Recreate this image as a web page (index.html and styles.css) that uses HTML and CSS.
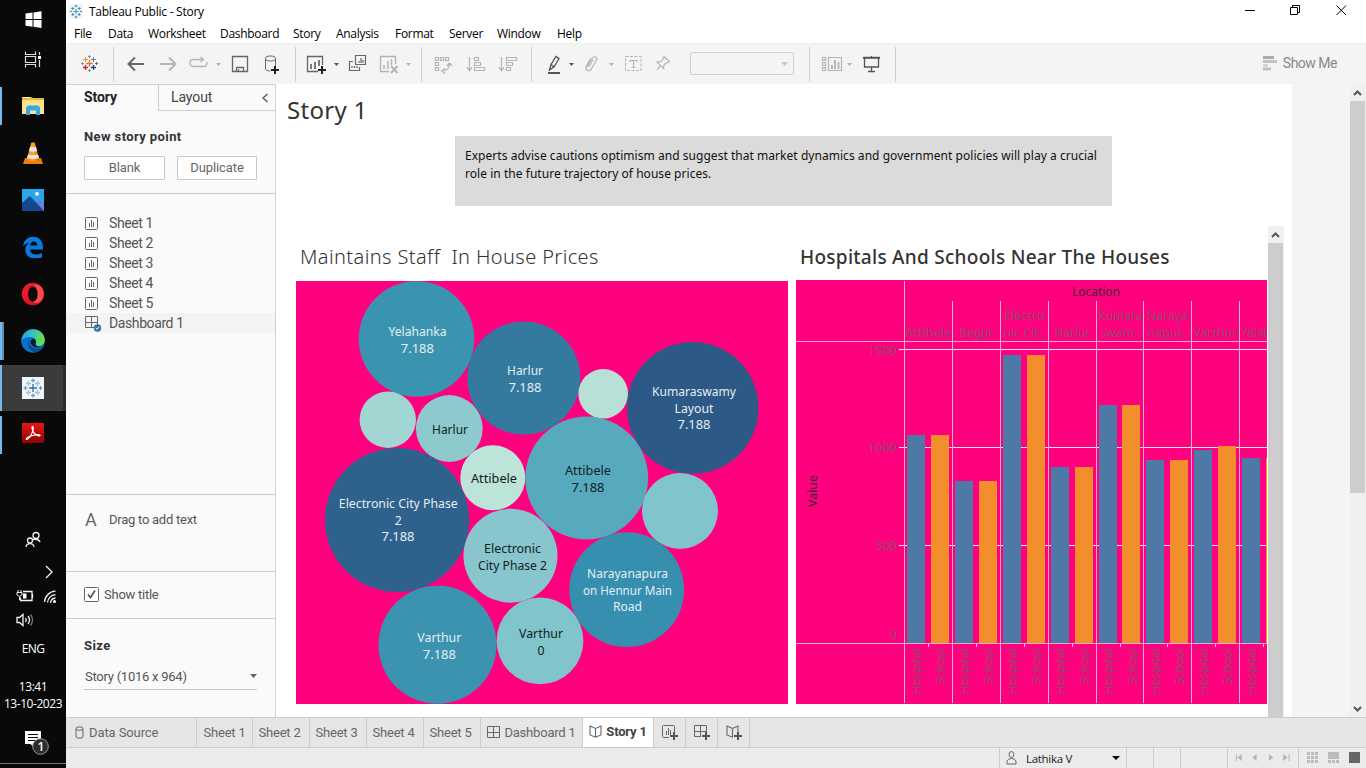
FILE: index.html
```html
<!DOCTYPE html>
<html lang="en">
<head>
<meta charset="utf-8">
<title>Tableau Public - Story</title>
<link rel="stylesheet" href="styles.css">
</head>
<body>
<svg width="0" height="0" class="defs" aria-hidden="true">
  <defs>
    <linearGradient id="gVlc" x1="0" x2="1"><stop offset="0" stop-color="#f58a0a"/><stop offset=".5" stop-color="#ffa62e"/><stop offset="1" stop-color="#d95f00"/></linearGradient>
    <linearGradient id="gPdf" x1="0" y1="0" x2="0" y2="1"><stop offset="0" stop-color="#f01212"/><stop offset="1" stop-color="#8a0505"/></linearGradient>
    <linearGradient id="gEdge" x1="0" y1="0" x2="1" y2=".3"><stop offset="0" stop-color="#1b9de2"/><stop offset=".5" stop-color="#35c1c6"/><stop offset="1" stop-color="#66e04b"/></linearGradient>
    <linearGradient id="gOpera" x1="0" y1="0" x2="1" y2="1"><stop offset="0" stop-color="#ff1b2d"/><stop offset="1" stop-color="#c4101e"/></linearGradient>
    <symbol id="sheet" viewBox="0 0 13 13"><rect x=".5" y=".5" width="12" height="12" rx="1" fill="none" stroke="#666"/><path d="M4.500 6v4M6.500 3v7M8.500 5v5" stroke="#666" fill="none"/></symbol>
    <symbol id="dash" viewBox="0 0 13 13"><path d="M.5.5h12v11H.5zM6.500.5v11M.5 6.500h12" stroke="#666" fill="none"/></symbol>
    <symbol id="book" viewBox="0 0 13 13"><path d="M1 1 6.500 3.500 12 1v9l-5.500 2.200L1 10zM6.500 3.500v8.500" stroke="#666" fill="none" stroke-width="1.100"/></symbol>
    <symbol id="plus" viewBox="0 0 8 8"><path d="M4 0v8M0 4h8" stroke="#555" stroke-width="2"/></symbol>
  </defs>
</svg>

<nav class="taskbar">
  <div class="slot slot-win"><svg width="17" height="17" viewBox="0 0 17 17"><path d="M.5 2.500 7.500 1.500V8h-7zM8.500 1.400 16.500.3V8h-8zM.5 9h7v6.700l-7-1zM8.500 9h8v7.900l-8-1.100z" fill="#fff"/></svg></div>
  <div class="slot slot-view"><svg width="18" height="17" viewBox="0 0 18 17"><path d="M1.500.5v3h10v-3M1.500 16.500v-3h10v3M1.500 5.500h10v6h-10zM15.500 1v3M15.500 9v7" fill="none" stroke="#ddd" stroke-width="1.200"/><rect x="14" y="5" width="3" height="3" fill="#fff"/></svg></div>
  <div class="slot run"><svg width="22" height="20" viewBox="0 0 22 20"><path d="M0 1h9l2 1h11v16H0z" fill="#e8b73c"/><path d="M0 4h22v14H0z" fill="#fde38d"/><path d="M1 1.500h7" stroke="#fff3b0"/><path d="M4 19v-7.500L6 9.500h10l2 2V19h-4v-4.500H8V19z" fill="#33a9e6"/></svg></div>
  <div class="slot"><svg width="22" height="24" viewBox="0 0 22 24"><path d="M3 17h16l2 6H1z" fill="#f07c05"/><path d="M9.300 1.500h3.400L17.500 19q-6.500 2.500-13 0z" fill="url(#gVlc)"/><path d="M8 6h6l1.100 4q-4 1.500-8.200 0zM6 13.500q5 1.600 10 0l1 3.500q-6 2-12 0z" fill="#e9e9e9"/></svg></div>
  <div class="slot"><svg width="22" height="22" viewBox="0 0 22 22"><path d="M0 0h22v22H0z" fill="#2aa6ea"/><path d="M10 22 16.500 10 22 16v6z" fill="#6f7fd8"/><path d="M0 14 8 7l14 15H0z" fill="#15478f"/><circle cx="15" cy="4.800" r="1.900" fill="#fff"/></svg></div>
  <div class="slot"><svg width="22" height="22" viewBox="0 0 22 22"><path d="M1 10C2 4 6 .7 11 .7c6.500 0 10 4.800 10 10.800v2H8c.2 3.800 3.300 5 6.300 5 2.300 0 4.200-.6 5.700-1.500v4.300c-2 .9-4.300 1.300-6.600 1.300C7.200 22.600 3.300 19 3.300 14c0-3 1.500-5.600 4.200-7-4 .4-5.500 2-6.500 3zm7-.5h7.300c0-2.500-1.300-4-3.600-4-2.100 0-3.400 1.700-3.700 4z" fill="#0a7ae0"/></svg></div>
  <div class="slot"><svg width="24" height="24" viewBox="0 0 24 24"><path fill-rule="evenodd" d="M12 .8a11.200 11.200 0 1 0 0 22.400A11.200 11.200 0 0 0 12 .8zm0 3.500c2.800 0 4.800 3.400 4.800 7.700s-2 7.700-4.800 7.700S7.200 16.300 7.200 12 9.200 4.300 12 4.300z" fill="url(#gOpera)"/><path d="M12 4.300c2-2 6-1.500 8.500 1.500a11 11 0 0 1 0 12.400c-2.500 3-6.500 3.500-8.500 1.500 2.800 0 4.800-3.400 4.800-7.700S14.800 4.300 12 4.300z" fill="#ff4a4a"/></svg></div>
  <div class="slot run run-two"><svg width="24" height="24" viewBox="0 0 24 24"><circle cx="12" cy="12" r="11.800" fill="#0e6fc6"/><path d="M.5 11C1.500 4.500 6 .2 12 .2c7 0 11.800 5 11.800 10.800 0 3.500-2.600 6-6 6-2.500 0-4-1-3.300-2.200C16 12.500 14 8 9 8 5 8 1.500 9.500.5 11z" fill="url(#gEdge)"/><path d="M8 14c0-3 1.500-4.500 3.500-5-5 1-6.500 10.500 1 14 4 .8 8-1.500 9.800-5C16 21 8.500 19 8 14z" fill="#114a8b"/><path d="M14.500 14.800c.8-1.800.4-4-1.500-5.300-3 .5-4.500 3.500-2.500 6 1.500 2.500 6 4 12 1.800-3 1-8.500.5-8-2.500z" fill="#061a30"/></svg></div>
  <div class="slot run active"><svg width="22" height="22" viewBox="0 0 22 22"><path d="M0 0h22v22H0z" fill="#f2f5f7"/><path d="M11 7v8M7 11h8" stroke="#2f7196" stroke-width="1.300"/><path d="M11 1.500v4M9 3.500h4M11 16.500v4M9 18.500h4M3.500 9v4M1.500 11h4M18.500 9v4M16.500 11h4" stroke="#5c94b4" stroke-width="1.200"/><path d="M6.500 4v5M4 6.500h5M15.500 4v5M13 6.500h5M6.500 13v5M4 15.500h5M15.500 13v5M13 15.500h5" stroke="#9fc3da" stroke-width="1.300"/></svg></div>
  <div class="slot run slot-pdf"><svg width="22" height="20" viewBox="0 0 22 20"><path d="M0 0h22v20H0z" fill="url(#gPdf)"/><path d="M10.500 3.500c1.800 0 .3 6-2 9.500s-4.500 4.200-4.300 2.800C4.500 13.500 17 10.500 18 12.300c.5 1.500-4 .2-6-2.500s-2.500-6.300-1.500-6.300z" fill="none" stroke="#fff" stroke-width="1.200"/></svg></div>
  <svg class="tray" width="66" height="112" viewBox="0 522 66 112" fill="none" stroke="#f2f2f2" stroke-width="1.300">
    <circle cx="36" cy="535.500" r="3"/><path d="M31.500 541c1-2.500 7.500-2.500 8.500 1"/><circle cx="30" cy="540.500" r="2.500" fill="#0a0a0a"/><path d="M26 547c.5-4.500 7.500-4.500 8 0"/>
    <path d="m46 566 6 6-6 6"/>
    <path d="M23 591.500h9v9H20.500v-3M32.500 594v4"/><path d="M17 592.500h5v2.500q-2.500 3-5 0zM18 590v2M21 590v2M19.500 597v3" stroke-width="1"/><path d="M23 593.500h3.500v5H23z" fill="#fff" stroke="none"/>
    <path d="M44.500 602a11.500 11.500 0 0 1 11-10.800M47.500 602.500a8.500 8.500 0 0 1 8-7.800M50.500 602.800a5.500 5.500 0 0 1 5-4.800"/><circle cx="54.500" cy="601.500" r="1.500" fill="#fff" stroke="none"/>
    <path d="M17 617.500h2.500l3.500-3v11l-3.500-3H17zM25.500 618q1.500 2 0 4M28 616q3 4 0 8"/><path d="M30.500 614.500q4 5.500 0 11" stroke="#777"/>
  </svg>
  <div class="lang">ENG</div>
  <div class="clock">13:41<br>13-10-2023</div>
  <svg class="note" width="66" height="43" viewBox="0 725 66 43"><path d="M25 731h16v13h-6.500v4l-4-4H25z" fill="#fff"/><path d="M28 734.500h10M28 737.500h10M28 740.500h10" stroke="#0a0a0a"/><circle cx="40.500" cy="746.500" r="7.800" fill="#2b2b2b" stroke="#999"/><text x="37.600" y="751" class="badge">1</text><path d="M0 763.500h66" stroke="#777"/></svg>
</nav>

<div class="app">
  <header class="titlebar">
    <svg width="14" height="15" viewBox="0 0 14 15"><path d="M0 0h14v15H0z" fill="#eef4f7"/><path d="M7 5v5M4.500 7.500h5M7 .8v2.600M5.700 2h2.600M7 11.600v2.600M5.700 13h2.600M.8 7.500h2.400M10.800 7.500h2.400M3.800 3v3M2.300 4.500h3M10.200 3v3M8.700 4.500h3M3.800 9v3M2.300 10.500h3M10.200 9v3M8.700 10.500h3" stroke="#3d86ad" stroke-width=".9"/></svg>
    <span class="app-name">Tableau Public - Story</span>
    <svg class="win-btns" width="120" height="22" viewBox="1240 0 120 22" fill="none" stroke="#000"><path d="M1245 10.500h10M1290.500 7.500h7v7h-7zM1292.500 7V5.500h7v7H1298M1336.500 5.500l9.500 9.500M1346 5.500l-9.500 9.500"/></svg>
  </header>
  <div class="menu"><span>File</span><span>Data</span><span>Worksheet</span><span>Dashboard</span><span>Story</span><span>Analysis</span><span>Format</span><span>Server</span><span>Window</span><span>Help</span></div>

  <div class="toolbar">
    <svg width="47" height="35" viewBox="66 47 47 35"><path d="M89.500 60v7M86 63.500h7" stroke="#e8762d" stroke-width="1.300"/><path d="M85.500 57v5M83 59.500h5" stroke="#eb912b"/><path d="M93.500 57v5M91 59.500h5" stroke="#5b879b"/><path d="M85.500 65v5M83 67.500h5" stroke="#c72035" stroke-width="1.300"/><path d="M93.500 65v5M91 67.500h5" stroke="#1f457e" stroke-width="1.300"/><path d="M89.500 55v3M88 56.500h3M89.500 69v3M88 70.500h3M82.500 62v3M81 63.500h3" stroke="#7199a6"/><path d="M96.500 62v3M95 63.500h3" stroke="#5c6692"/></svg>
    <svg width="182" height="35" viewBox="113 47 182 35" fill="none" stroke="#666"><path d="M144 64h-15M135 57.500l-6.500 6.500 6.500 6.500" stroke-width="2"/><path d="M160 64h15M169 57.500l6.500 6.500-6.500 6.500" stroke="#b4b4b4" stroke-width="2"/><path d="M202 59.500h-8q-4 0-4 3.500t4 3.500h9q4 0 4-3.500v-1M198 59.500h6M200.500 57l3 2.500-3 2.500" stroke="#b4b4b4" stroke-width="1.300"/><path d="M216 63h5l-2.500 3z" fill="#b4b4b4" stroke="none"/><path d="M232.500 56.500h15v15h-15zM236.500 71.500v-4h7v4M238.500 71.500v-2" stroke-width="1.300"/><path d="M265.500 59v10q0 2 5 2M275.500 59v7"/><ellipse cx="270.500" cy="58.500" rx="5" ry="2.500"/><path d="M275 66v8M271 70h8" stroke="#222" stroke-width="2"/></svg>
    <svg width="126" height="35" viewBox="295 47 126 35" fill="none" stroke="#666"><path d="M322.500 65v-8.500h-15v15H318" stroke-width="1.300"/><path d="M311 64v5M315 62v7M319 60v6" stroke-width="1.700"/><path d="M322 66v8M318 70h8" stroke="#222" stroke-width="2"/><path d="M334 63h5l-2.500 3z" fill="#555" stroke="none"/><path d="M355.500 55.500h10v9h-10zM353 61.500h-3.500v9h10V67M359 61v2M361 58v5M363 60v3M352 66v2M354.500 66v2M357 66v2" stroke-width="1.200"/><g stroke="#b4b4b4"><path d="M395.500 64v-7.500h-15v15H389" stroke-width="1.300"/><path d="M384 65v4M388 61v8M391.500 59v6" stroke-width="1.500"/><path d="m391 66 6.500 7M397.500 66l-6.500 7" stroke-width="1.900"/></g><path d="M406 63h5l-2.500 3z" fill="#b4b4b4" stroke="none"/></svg>
    <svg width="110" height="35" viewBox="421 47 110 35" fill="none" stroke="#b4b4b4" stroke-width="1.200"><path d="M435.500 57.500h3v3h-3zM440.500 57.500h3v3h-3zM445.500 57.500h3v3h-3zM435.500 62.500h3v3h-3zM435.500 67.500h3v3h-3zM449.500 63.500q0 6-6 7.500M447 66l2.500-3 2.500 3M445 68.500l-3.500 2.500 3.500 2.500M469.500 57v13M467 67.500l2.500 3 2.500-3M474.500 57.500h4v3h-4zM474.500 62.500h6v3h-6zM474.500 67.500h10v3h-10zM501.500 57v13M499 67.500l2.500 3 2.500-3M506.500 57.500h10v3h-10zM506.500 62.500h6v3h-6zM506.500 67.500h4v3h-4z"/></svg>
    <svg width="278" height="35" viewBox="531 47 278 35" fill="none" stroke="#b4b4b4"><path d="M549.500 70l1.500-5.500 5-8 3 2-5 8.500zM551 64.500l3 2.500" stroke="#555" stroke-width="1.300"/><path d="M548 73h12" stroke="#555" stroke-width="2"/><path d="M569 63h5l-2.500 3z" fill="#555" stroke="none"/><path d="M587 67l4.500-8q1.500-3 4-2t.5 4l-5 8.500q-2 2-4 .5t-.5-4l4-7.500M589 67l4-7.500" stroke-width="1.200"/><path d="M609 63h5l-2.500 3z" fill="#b4b4b4" stroke="none"/><path d="M625.500 56.500h15.500v14h-15.500z" stroke-dasharray="3 1.500"/><path d="M630 62v-1.500h7V62M633.500 60.500v7M631.500 67.500h4" stroke-width="1.200"/><path d="m663 56.500 6 4-1 1.500-2 .5-2 3 .5 3-7.500-5.500 3.500-1 2-3zM661 66l-3 4.500" transform="rotate(8 663 63)" stroke-width="1.200"/><rect x="690.500" y="52.500" width="103" height="22" rx="1.500" stroke="#d0d0d0"/><path d="M781 62h7l-3.500 4z" fill="#c8c8c8" stroke="none"/></svg>
    <svg width="86" height="35" viewBox="809 47 86 35" fill="none" stroke="#b4b4b4" stroke-width="1.200"><path d="M822.500 57.500h3v3h-3zM822.500 62.500h3v3h-3zM822.500 67.500h3v3h-3zM828.500 57.500h13v13h-13z"/><path d="M832 65v4M835 60v9M838.500 62v7" stroke-width="1.900"/><path d="M847 63h5l-2.500 3z" fill="#b4b4b4" stroke="none"/><path d="M864.500 58v9h14v-9M871.500 67v4M868 71.500h7M871.500 56v2" stroke="#555" stroke-width="1.300"/><path d="M863 57.800h17" stroke="#555" stroke-width="2"/></svg>
    <div class="show-me"><svg width="14" height="16" viewBox="0 0 14 16"><path d="M0 1h11v3H0z" fill="#aaa"/><path d="M0 5h14v3H0zM0 12.500h8v3H0z" fill="#c1c1c1"/><path d="M0 9h5v3H0z" fill="#d5d5d5"/></svg><span>Show Me</span></div>
  </div>

  <main class="workspace">
    <aside class="side">
      <div class="side-tabs"><b>Story</b><span class="layout-tab">Layout<svg width="8" height="10" viewBox="0 0 8 10"><path d="M6.500 1 2 5l4.500 4" fill="none" stroke="#555" stroke-width="1.300"/></svg></span></div>
      <section class="new-point"><h3>New story point</h3><div class="btns"><button>Blank</button><button>Duplicate</button></div></section>
      <ul class="sheets">
        <li><svg width="13" height="13"><use href="#sheet"/></svg>Sheet 1</li>
        <li><svg width="13" height="13"><use href="#sheet"/></svg>Sheet 2</li>
        <li><svg width="13" height="13"><use href="#sheet"/></svg>Sheet 3</li>
        <li><svg width="13" height="13"><use href="#sheet"/></svg>Sheet 4</li>
        <li><svg width="13" height="13"><use href="#sheet"/></svg>Sheet 5</li>
        <li class="sel"><svg width="17" height="17" viewBox="0 -1 17 17"><use href="#dash" width="13" height="13"/><circle cx="12.500" cy="12" r="3.700" fill="#33769a"/><path d="m10.700 12 1.400 1.300 2.200-2.400" stroke="#fff" fill="none"/></svg>Dashboard 1</li>
      </ul>
      <section class="drag"><span class="big-a">A</span>Drag to add text</section>
      <section class="show-title"><svg width="15" height="15" viewBox="0 0 15 15"><rect x=".5" y=".5" width="14" height="14" rx="1" fill="#fff" stroke="#666"/><path d="m4 7.500 2.500 3 4.500-7" fill="none" stroke="#555" stroke-width="1.700"/></svg>Show title</section>
      <section class="size"><h3>Size</h3><div class="select">Story (1016 x 964)<svg width="7" height="4"><path d="M0 0h7L3.500 4z" fill="#666"/></svg></div></section>
    </aside>

    <article class="story">
      <h1>Story 1</h1>
      <p class="caption">Experts advise cautions optimism and suggest that market dynamics and government policies will play a crucial<br>role in the future trajectory of house prices.</p>
      <div class="board">
        <section class="panel bubbles-panel"><h2>Maintains Staff&nbsp; In House Prices</h2><svg id="bubbles" width="492" height="423" viewBox="296 281 492 423"></svg></section>
        <section class="panel bars-panel"><h2>Hospitals And Schools Near The Houses</h2><svg id="bars" width="471" height="424" viewBox="796 280 471 424"></svg></section>
        <div class="scroll inner"><svg width="15" height="17" viewBox="0 0 15 17"><path d="m4 11 3.500-3.500L11 11" fill="none" stroke="#555" stroke-width="2"/></svg><i></i></div>
      </div>
    </article>
    <div class="scroll outer"><svg width="15" height="17" viewBox="0 0 15 17"><path d="m4 11 3.500-3.500L11 11" fill="none" stroke="#555" stroke-width="2"/></svg><i></i><svg width="15" height="17" viewBox="0 0 15 17"><path d="m4 7 3.500 3.500L11 7" fill="none" stroke="#555" stroke-width="2"/></svg></div>
  </main>

  <footer class="tabs">
    <span class="t-source"><svg width="9" height="13" viewBox="0 0 9 13"><rect x="1" y="1" width="7" height="11" rx="2" fill="none" stroke="#666"/><path d="M1 3.500q3.500 2 7 0" fill="none" stroke="#666"/></svg>Data Source</span>
    <span class="t-first">Sheet 1</span><span>Sheet 2</span><span>Sheet 3</span><span>Sheet 4</span><span>Sheet 5</span>
    <span class="t-dash"><svg width="13" height="13"><use href="#dash"/></svg>Dashboard 1</span>
    <span class="t-story"><svg width="13" height="13"><use href="#book"/></svg>Story 1</span>
    <span class="t-add"><svg width="16" height="16"><use href="#sheet" width="13" height="13"/><path d="M7 12h9M11.500 8v8" stroke="#e6e6e6" stroke-width="4"/><use href="#plus" x="8" y="7" width="8" height="8"/></svg></span>
    <span class="t-add"><svg width="16" height="16"><use href="#dash" width="13" height="13"/><path d="M7 12h9M11.500 8v8" stroke="#e6e6e6" stroke-width="4"/><use href="#plus" x="8" y="7" width="8" height="8"/></svg></span>
    <span class="t-add"><svg width="16" height="16"><use href="#book" width="13" height="13"/><path d="M7 12h9M11.500 8v8" stroke="#e6e6e6" stroke-width="4"/><use href="#plus" x="8" y="7" width="8" height="8"/></svg></span>
  </footer>
  <footer class="status">
    <div class="user"><svg width="11" height="14" viewBox="0 0 11 14"><ellipse cx="5.500" cy="3.500" rx="2.400" ry="3" fill="none" stroke="#666"/><path d="M1 13v-3q1-2.500 4.500-2.500T10 10v3z" fill="none" stroke="#666"/></svg><span>Lathika V</span><svg width="8" height="4"><path d="M0 0h8L4 4z"/></svg></div>
    <div class="gap-a"></div><div class="gap-a"></div><div class="gap-b"></div>
    <svg class="nav" width="71" height="20" viewBox="1228 748 71 20"><path d="M1236 754h1v7h-1zM1242 754v7l-4.500-3.500zM1257 754v7l-4.500-3.500zM1269.500 754v7l4.500-3.500zM1284 754v7l4.500-3.500zM1289.500 754h1v7h-1z" fill="#b5b5b5"/></svg>
    <svg width="67" height="20" viewBox="1299 748 67 20"><path d="M1307 752h3v3h-3zM1311 752h3v3h-3zM1315 752h3v3h-3zM1307 756h3v3h-3zM1311 756h3v3h-3zM1315 756h3v3h-3zM1307 760h3v3h-3zM1311 760h3v3h-3zM1315 760h3v3h-3zM1328 752h11v7h-11zM1328 760h3v3h-3zM1332 760h3v3h-3zM1336 760h3v3h-3z" fill="#bbb"/><path d="M1349 752h11v11h-11z" fill="#666"/></svg>
  </footer>
</div>
<script src="script.js"></script>
</body>
</html>
```
FILE: script.js
```js
const txt = (x, y, w, s, cls, extra = '') =>
  `<text x="${x}" y="${y}" textLength="${w}" lengthAdjust="spacingAndGlyphs" class="${cls}" ${extra}>${s}</text>`;
const mid = (cx, y, w, s, cls) => txt(cx - w / 2, y, w, s, cls);

// cx, cy, radius, colour, label class, [centre x, baseline, width, text]
const bubbles = [
  [416.5, 339, 57.8, '#3b94af', 'lt', [417.5, 336, 58, 'Yelahanka'], [417.3, 353, 33, '7.188']],
  [523.8, 378, 56.5, '#34799e', 'lt', [525, 375, 36, 'Harlur'], [525, 392, 33, '7.188']],
  [387.8, 419.8, 28.2, '#a1d6d2', 'dk'],
  [449.3, 428.5, 33.4, '#8dc9cd', 'dk', [450, 434, 36, 'Harlur']],
  [492.8, 477.8, 32.5, '#bce4d8', 'dk', [494, 483, 46, 'Attibele']],
  [397, 520, 72.1, '#2e618c', 'lt', [398.3, 508, 119, 'Electronic City Phase'], [398.3, 525, 7, '2'], [398, 541, 33, '7.188']],
  [510.5, 555.7, 47, '#89c5cc', 'dk', [512.5, 553, 57, 'Electronic'], [512.5, 570, 69, 'City Phase 2']],
  [437.5, 644.8, 59, '#3b93b0', 'lt', [439.3, 642, 44, 'Varthur'], [439.3, 659, 33, '7.188']],
  [540, 640.8, 43.4, '#82c4cc', 'dk', [541, 638, 44, 'Varthur'], [541, 655, 7, '0']],
  [603.2, 393.8, 24.8, '#b7e1d6', 'dk'],
  [692.7, 407.9, 65.8, '#2c5985', 'lt', [694, 396, 84, 'Kumaraswamy'], [694, 413, 39, 'Layout'], [694, 429, 33, '7.188']],
  [586.7, 478, 61.4, '#57aabe', 'dk', [588, 475, 46, 'Attibele'], [588, 492, 33, '7.188']],
  [680, 511, 38, '#82c4cc', 'dk'],
  [626.7, 589.7, 57.4, '#378fb0', 'lt', [627.5, 578, 81, 'Narayanapura'], [627.5, 595, 89, 'on Hennur Main'], [627.5, 611, 29, 'Road']],
];
document.getElementById('bubbles').innerHTML = bubbles.map(([x, y, r, c, k, ...ls]) =>
  `<circle cx="${x}" cy="${y}" r="${r}" fill="${c}"/>` +
  ls.map(([a, b, w, s]) => mid(a, b, w, s, k)).join('')).join('');

// column left edge, hospital top, school top, school offset, header lines [text, width]
const cols = [
  [904, 435, 435, 27, ['Attibele', 46]],
  [952, 481, 481, 27, ['Begur', 34]],
  [1000, 355, 355, 27, ['nic Cit..', 42], ['Electro', 41]],
  [1048, 467, 467, 27, ['Harlur', 36]],
  [1096, 405, 405, 26, ['swam..', 40], ['Kumara', 44]],
  [1143, 460, 460, 27, ['napur..', 40], ['Naraya', 41]],
  [1191, 450, 446, 27, ['Varthur', 44]],
  [1239, 458, 458, 27, ['Yelahanka', 57]],
];
const base = 643;
const rect = (x, y, w, h, c) => `<rect x="${x}" y="${y}" width="${w}" height="${h}" fill="${c}"/>`;
let s = '';
for (const y of [349, 447, 545]) s += rect(899, y, 368, 1, '#ffe3f1');
s += rect(796, 341, 471, 1, '#f0a8cc');
cols.forEach(([x, h, c, off, ...head], i) => {
  s += rect(x, i ? 301 : 281, 1, i ? 402 : 422, '#d9b3c8');
  s += rect(x + 3, h, 18, base - h, '#4e79a7') + rect(x + off, c, 18, base - c, '#f28e2b');
  s += rect(x + 24, base, 1, 4, '#e8d0dc');
  head.forEach(([t, w], k) => {
    s += i === 7 ? txt(x + 2, 337, w, t, 'ax') : mid(x + 24.5, 337 - 17 * k, w, t, 'ax');
  });
  s += txt(0, 0, 46, 'Hospital', 'ax', `transform="translate(${x + 16.5} 694.5) rotate(-90)"`);
  if (i < 7) s += txt(0, 0, 36, 'School', 'ax', `transform="translate(${x + 40.500} 684.5) rotate(-90)"`);
});
s += rect(796, base, 471, 1, '#d9b3c8');
s += txt(868, 355, 29, '1500', 'ax') + txt(868, 452, 29, '1000', 'ax') + txt(875.5, 550, 21.5, '500', 'ax') + txt(890, 639, 7, '0', 'ax');
s += mid(1096, 296, 48, 'Location', 'at') + txt(0, 0, 32, 'Value', 'at', 'transform="translate(816.5 507) rotate(-90)"');
document.getElementById('bars').innerHTML = s;
```
FILE: styles.css
```css
* { box-sizing: border-box; }
body { margin: 0; width: 1366px; height: 768px; display: flex; overflow: hidden; font-family: Roboto, sans-serif; color: #555; }
svg { display: block; flex: none; }
.defs { position: absolute; }
h1, h2, h3, p, ul { margin: 0; padding: 0; font-weight: 400; }

.taskbar { width: 66px; height: 768px; flex: none; background: #090909; color: #fff; display: flex; flex-direction: column; font-family: "Open Sans", sans-serif; }
.slot { height: 46px; margin-bottom: 1px; flex: none; display: flex; align-items: center; justify-content: center; background: linear-gradient(#76b9ed, #76b9ed) no-repeat -9px 4px / 0 0; }
.slot-win { height: 40px; margin: 0; padding-bottom: 1px; }
.slot-view { height: 40px; margin: 0 0 3px; padding-bottom: 1px; }
.slot-pdf { padding-bottom: 4px; }
.run { background-size: 2px 38px; background-position: 0 4px; }
.run-two { background-image: linear-gradient(90deg, #76b9ed 50%, #5b8fb8 50%); background-size: 4px 38px; }
.active { background-color: #3b3b3b; background-size: 2px 46px; background-position: 0 0; border-right: 3px solid #2c2c2c; padding-left: 3px; padding-bottom: 1px; }
.tray { margin-top: 63px; }
.lang { font-size: 12px; line-height: 30px; text-align: center; letter-spacing: -.6px; }
.clock { font-size: 12px; line-height: 17px; text-align: center; letter-spacing: -.45px; margin-top: 14px; height: 47px; white-space: nowrap; }
.badge { fill: #fff; font: 600 12px "Open Sans", sans-serif; }

.app { flex: 1; display: flex; flex-direction: column; background: #fff; min-width: 0; }
.titlebar { height: 22px; display: flex; align-items: center; padding-left: 3px; font: 12px "Open Sans", sans-serif; color: #000; }
.app-name { margin-left: 6px; flex: 1; letter-spacing: -.25px; }
.win-btns { margin-right: 6px; }
.menu { height: 21px; display: grid; grid-template-columns: 34px 40px 72px 73px 43px 59px 54px 48px 60px 40px; padding-left: 8px; font: 12px/23px "Open Sans", sans-serif; color: #000; letter-spacing: -.3px; }

.toolbar { height: 41px; background: #f4f4f4; border-top: 1px solid #eee; display: flex; padding-top: 3px; }
.toolbar > svg { box-shadow: 1px 0 #d0d0d0; }
.show-me { margin: 0 29px 0 auto; height: 32px; display: flex; align-items: center; gap: 6px; font-size: 14px; letter-spacing: -.5px; color: #888; }

.workspace { height: 633px; display: flex; background: #f4f4f4; }
.side { width: 210px; flex: none; background: #fafafa; border-right: 1px solid #d0d0d0; border-top: 1px solid #d0d0d0; font-size: 13px; letter-spacing: -.25px; }
.side-tabs { display: flex; height: 26px; line-height: 25px; font-size: 14px; color: #444; letter-spacing: -.1px; }
.side-tabs b { width: 92px; padding-left: 18px; color: #222; font-weight: 700; }
.layout-tab { flex: 1; border: solid #d0d0d0; border-width: 0 0 1px 1px; padding: 0 6px 0 12px; display: flex; justify-content: space-between; align-items: center; }
.side h3 { font-size: 13px; font-weight: 700; color: #333; line-height: 16px; letter-spacing: .4px; }
.new-point { height: 83px; padding: 18px 18px 0; border-bottom: 1px solid #ccc; }
.btns { display: flex; gap: 12px; margin-top: 11px; }
.btns button { flex: 0 0 81px; height: 24px; padding: 0 0 2px; border: 1px solid #c8c8c8; border-radius: 1px; background: #fff; font: 13px Roboto, sans-serif; letter-spacing: -.1px; color: #666; }
.btns button + button { flex-basis: 80px; }
.sheets { list-style: none; height: 301px; padding-top: 19px; border-bottom: 1px solid #ccc; letter-spacing: -.4px; }
.sheets li { height: 20px; padding-left: 19px; display: flex; align-items: center; gap: 11px; font-size: 14px; }
.sheets li.sel { background: #f4f4f4; gap: 7px; }
.drag { height: 77px; border-bottom: 1px solid #ccc; display: flex; align-items: center; padding: 0 0 27px 19px; }
.big-a { font-size: 18px; width: 24px; color: #666; }
.show-title { height: 47px; border-bottom: 1px solid #ccc; display: flex; align-items: center; gap: 5px; padding: 0 0 2px 18px; }
.size { padding: 19px 18px 0; }
.select { margin-top: 11px; height: 25px; border-bottom: 1px solid #c4c4c4; display: flex; justify-content: space-between; align-items: center; padding: 0 0 2px 1px; }

.story { width: 1016px; flex: none; background: #fff; font-family: "Noto Sans", sans-serif; display: flex; flex-direction: column; }
.story h1 { height: 52px; padding-left: 11px; font-size: 24px; line-height: 51px; color: #333; letter-spacing: .3px; }
.caption { margin-left: 179px; width: 657px; height: 70px; background: #dbdbdb; padding: 11px 10px; font-size: 12px; line-height: 18px; color: #111; white-space: nowrap; letter-spacing: .04px; }
.board { margin-top: 20px; height: 491px; display: flex; padding-left: 20px; }
.panel h2 { padding-left: 4px; color: #333; white-space: nowrap; line-height: 62px; }
.bubbles-panel { width: 500px; }
.bubbles-panel h2 { font-size: 20px; font-weight: 300; height: 55px; letter-spacing: .4px; }
.bars-panel { width: 472px; }
.bars-panel h2 { font-size: 19px; font-weight: 500; height: 54px; letter-spacing: .27px; }
.bubbles-panel > svg, .bars-panel > svg { background: #ff007f; }
.scroll { width: 16px; background: #f0f0f0; display: flex; flex-direction: column; }
.scroll i { width: 15px; background: #cdcdcd; flex: 1; }
.outer { margin-left: auto; }
.outer i { flex: 0 0 392px; }
.outer svg:last-child { margin-top: auto; }
#bubbles text, #bars text { font: 12.5px "Noto Sans", sans-serif; }
.lt { fill: #e4eef3; }
.dk { fill: #122; }
.ax { fill: #8c4c6c; }
.at { fill: #3c2532; }

.tabs { height: 31px; background: #e6e6e6; border: solid #ccc; border-width: 1px 0; display: flex; font-size: 13px; color: #666; }
.tabs span { width: 57px; border-right: 1px solid #ccc; display: flex; align-items: center; justify-content: center; white-space: nowrap; gap: 4px; letter-spacing: -.2px; padding-right: 3px; }
.tabs .t-source { width: 131px; justify-content: flex-start; padding-left: 9px; gap: 5px; letter-spacing: -.1px; }
.tabs .t-first { width: 56px; padding-right: 0; }
.tabs .t-dash { width: 102px; padding-right: 0; }
.tabs .t-story { width: 71px; background: #fff; font-weight: 700; color: #444; padding: 0 0 2px; }
.tabs .t-add { width: 32px; padding-right: 0; }
.status { height: 20px; background: #ebebeb; display: flex; justify-content: flex-end; }
.user { width: 128px; border: solid #ccc; border-width: 0 1px; display: flex; align-items: center; padding: 0 6px; font: 11.5px "Open Sans", sans-serif; color: #222; letter-spacing: -.3px; }
.user span { flex: 1; margin-left: 9px; }
.gap-a { width: 27px; border-right: 1px solid #ccc; }
.gap-b { width: 47px; border-right: 1px solid #ccc; }
.nav { border-right: 1px solid #ccc; }
```
